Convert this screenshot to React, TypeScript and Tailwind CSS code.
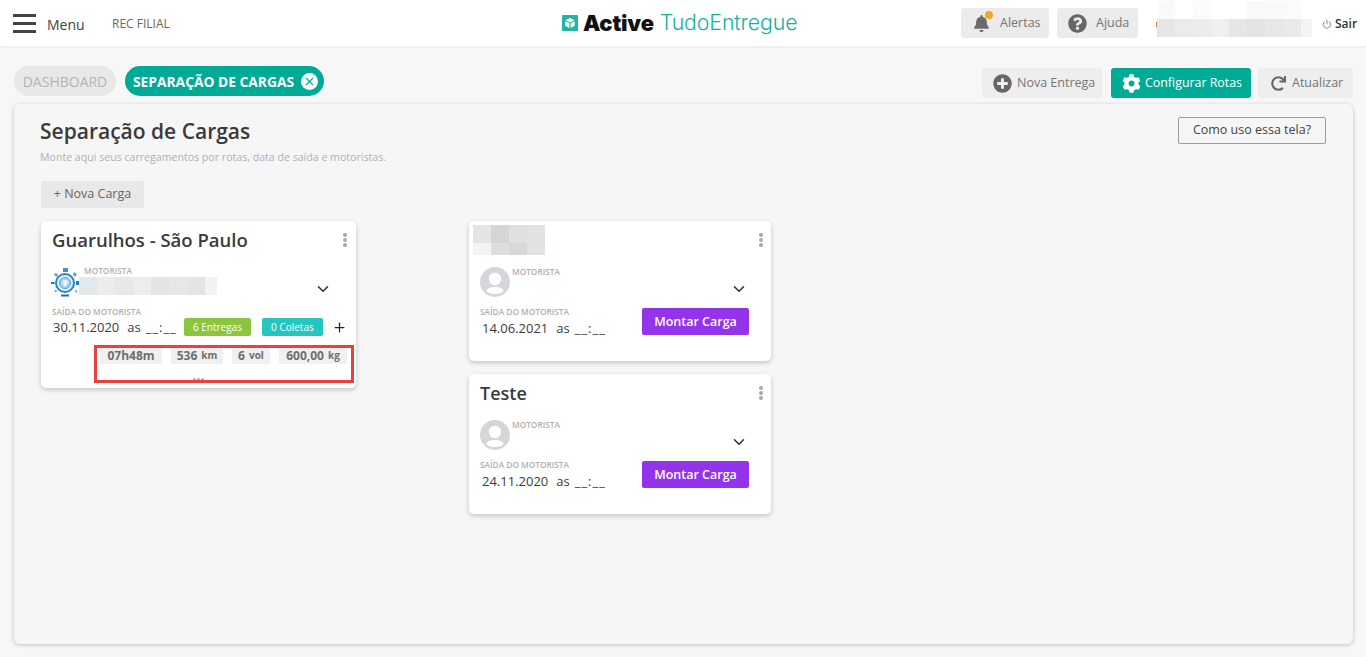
import { ChevronDown, Plus, Power, X } from 'lucide-react';
import { FaBell, FaCog, FaPlusCircle, FaQuestionCircle, FaRedo } from 'react-icons/fa';

const FONT = "font-['Open_Sans',sans-serif]";
const LABEL = 'h-[11px] text-[8.3px] leading-[9px] font-semibold whitespace-nowrap text-[#afafaf]';

const Mosaic = ({ colors, cols, className }: { colors: string[]; cols: number; className: string }) => (
  <div className={`shrink-0 overflow-hidden ${className}`}>
    <div className="grid" style={{ gridTemplateColumns: `repeat(${cols}, 18px)`, gridAutoRows: '18px' }}>
      {colors.map((c, i) => (
        <div key={i} style={{ backgroundColor: c }} />
      ))}
    </div>
  </div>
);

const Dots = () => (
  <div className="flex flex-col gap-[1px]">
    <span className="h-[4px] w-[4px] rounded-full bg-[#a9a9a9]" />
    <span className="h-[4px] w-[4px] rounded-full bg-[#a9a9a9]" />
    <span className="h-[4px] w-[4px] rounded-full bg-[#a9a9a9]" />
  </div>
);

const Avatar = () => (
  <svg viewBox="0 0 30 30" className="h-[30px] w-[30px] shrink-0">
    <circle cx="15" cy="15" r="15" fill="#d5d6da" />
    <circle cx="15" cy="12" r="6.2" fill="#fff" />
    <ellipse cx="15" cy="23.5" rx="8.5" ry="3.6" fill="#fff" />
  </svg>
);

const GlobeLogo = () => (
  <svg viewBox="0 0 28 30" className="h-[30px] w-[28px] shrink-0">
    <rect x="12" y="1" width="5" height="4" fill="#4d8fc4" />
    <path d="M4 6l3 1-1 3-3-2zM23 5l3 2-2 3-2-2z" fill="#6c9cc6" />
    <rect x="0" y="15" width="3.5" height="2" fill="#1f74b8" />
    <rect x="25" y="14" width="3" height="4" fill="#1f80c8" />
    <path d="M3 23l3 0-1 3zM23 24l3-1 0 3z" fill="#7aa5ca" />
    <rect x="10" y="27.5" width="8" height="2" fill="#2a6ca6" />
    <circle cx="14" cy="16" r="9" fill="#e6f2fa" stroke="#1f86cc" strokeWidth="2" />
    <circle cx="14" cy="16" r="5.5" fill="#a8d4ef" stroke="#4aa3dc" strokeWidth="1" />
    <path d="M12 13h4l1 3-3 4-2-3z" fill="#e8f4fb" />
  </svg>
);

const HeaderLogo = () => (
  <svg viewBox="0 0 16 16" className="h-[16px] w-[16px] shrink-0">
    <rect width="16" height="16" rx="1" fill="#1fb5a0" />
    <path d="M8 3l4.5 2.2L8 7.4 3.5 5.2zM3.3 6.3l4.1 2v4.6l-4.1-2.1zM12.7 6.3l-4.1 2v4.6l4.1-2.1z" fill="#fff" />
  </svg>
);

const DateLine = ({ date }: { date: string }) => (
  <p className="text-[13px] leading-[18px] whitespace-nowrap text-[#3c3c3c]">
    <span>{date}</span>
    <span className="ml-[8px]">as</span>
    <span className="ml-[5px] tracking-[1px]">__:__</span>
  </p>
);

const EmptyCard = ({ title, date }: { title: React.ReactNode; date: string }) => (
  <div className="h-[140px] rounded-[5px] bg-white pt-[4px] pr-[8px] pl-[11px] shadow-[0_2px_5px_rgba(0,0,0,0.2)]">
    <div className="flex h-[30px] items-start justify-between">
      {title}
      <div className="mt-[8px]">
        <Dots />
      </div>
    </div>
    <div className="mt-[12px] flex h-[30px]">
      <Avatar />
      <div className="ml-[2px] flex-1">
        <p className={LABEL}>MOTORISTA</p>
        <div className="mt-[2px] flex justify-end pr-[15px]">
          <ChevronDown size={18} strokeWidth={2} className="text-[#22323c]" />
        </div>
      </div>
    </div>
    <div className="mt-[10px] flex items-start justify-between pr-[14px]">
      <div>
        <p className={LABEL}>SAÍDA DO MOTORISTA</p>
        <div className="mt-[1px] pl-[2px]">
          <DateLine date={date} />
        </div>
      </div>
      <button className="mt-[1px] h-[27px] w-[107px] rounded-[2px] bg-[#9333ea] pt-[1px] text-[12.5px] font-semibold text-white">Montar Carga</button>
    </div>
  </div>
);

const StatChip = ({ value, unit, className }: { value: string; unit?: string; className: string }) => (
  <div className={`flex h-[17px] items-center justify-center bg-[#f0f0f0] text-[12px] font-bold text-[#6e6e6e] ${className}`}>
    {value}
    {unit && <span className="ml-[4px] text-[10px]">{unit}</span>}
  </div>
);

export default function App() {
  return (
    <div className={`flex h-[657px] w-[1366px] flex-col overflow-hidden bg-[#f7f7f7] ${FONT}`}>
      <header className="flex h-[46px] shrink-0 items-center bg-white shadow-[0_1px_2px_rgba(0,0,0,0.05)]">
        <div className="ml-[13px] flex w-[23px] flex-col gap-[5px]">
          <span className="h-[3px] bg-[#444]" />
          <span className="h-[3px] bg-[#444]" />
          <span className="h-[3px] bg-[#444]" />
        </div>
        <span className="mt-[2px] ml-[11px] w-[38px] text-[14px] text-[#3f3f46]">Menu</span>
        <span className="mt-[2px] ml-[27px] w-[59px] text-[12px] whitespace-nowrap text-[#6f6660]">REC FILIAL</span>
        <div className="ml-[391px] flex w-[235px] items-center">
          <HeaderLogo />
          <span className="ml-[5px] font-['Inter',sans-serif] text-[22px] leading-none font-black tracking-[-0.2px] text-[#111]">Active</span>
          <span className="ml-[6px] font-['Inter',sans-serif] text-[21.3px] leading-none font-light tracking-[-0.1px] whitespace-nowrap text-[#14b19c]">TudoEntregue</span>
        </div>
        <div className="ml-[164px] flex h-[30px] w-[88px] items-center rounded-[3px] bg-[#ebebeb] pl-[12px]">
          <div className="relative">
            <FaBell size={17} className="text-[#6b6b6b]" />
            <span className="absolute top-[-4px] right-[-3px] h-[8px] w-[8px] rounded-full bg-[#f5a623]" />
          </div>
          <span className="ml-[10px] text-[12.5px] text-[#757575]">Alertas</span>
        </div>
        <div className="ml-[8px] flex h-[30px] w-[81px] items-center rounded-[3px] bg-[#ebebeb] pl-[11px]">
          <FaQuestionCircle size={19} className="text-[#666]" />
          <span className="ml-[9px] text-[12.5px] text-[#757575]">Ajuda</span>
        </div>
        <span className="mb-[-3px] ml-[18px] h-[5px] w-[1px] bg-[#d98a4a]" />
        <Mosaic
          className="mb-[8px] h-[36px] w-[155px]"
          cols={9}
          colors={[
            '#fafafa', '#ffffff', '#fbfbfb', '#ffffff', '#ffffff', '#f9f9f9', '#fafafa', '#fbfbfb', '#ffffff',
            '#e5e6e8', '#ebebeb', '#ececec', '#efefef', '#e6e6e6', '#e3e3e3', '#e7e7e7', '#e9e9e9', '#f4f4f4',
          ]}
        />
        <Power size={10} className="mt-[2px] ml-[10px] text-[#777]" />
        <span className="mt-[2px] ml-[3px] text-[12px] font-semibold text-[#333]">Sair</span>
      </header>

      <div className="flex h-[58px] shrink-0 items-start pt-[20px] pl-[14px]">
        <div className="flex h-[30px] w-[102px] items-center justify-center rounded-full bg-[#e8e8e8] text-[14px] text-[#b4b4b4]">DASHBOARD</div>
        <div className="ml-[9px] flex h-[30px] w-[199px] items-center rounded-full bg-[#00ab96] pl-[8px]">
          <span className="mt-[2px] w-[162px] text-[13.8px] font-bold whitespace-nowrap text-white">SEPARAÇÃO DE CARGAS</span>
          <span className="ml-[6px] flex h-[17px] w-[17px] items-center justify-center rounded-full bg-white">
            <X size={13} strokeWidth={2} className="text-[#00ab96]" />
          </span>
        </div>
        <div className="mt-[2px] ml-[658px] flex h-[30px] w-[120px] items-center rounded-[3px] bg-[#eeeeee] pl-[11px]">
          <FaPlusCircle size={19} className="text-[#666]" />
          <span className="ml-[5px] text-[12.5px] whitespace-nowrap text-[#757575]">Nova Entrega</span>
        </div>
        <div className="mt-[2px] ml-[9px] flex h-[30px] w-[140px] items-center rounded-[3px] bg-[#00ab96] pl-[11px]">
          <FaCog size={19} className="text-white" />
          <span className="ml-[4px] text-[12.4px] whitespace-nowrap text-white">Configurar Rotas</span>
        </div>
        <div className="mt-[2px] ml-[7px] flex h-[30px] w-[95px] items-center rounded-[3px] bg-[#eeeeee] pl-[13px]">
          <FaRedo size={15} className="text-[#666]" />
          <span className="ml-[6px] text-[12.5px] whitespace-nowrap text-[#757575]">Atualizar</span>
        </div>
      </div>

      <main className="ml-[14px] h-[540px] w-[1339px] shrink-0 rounded-[6px] bg-[#f6f6f6] pt-[13px] pl-[27px] shadow-[0_1px_4px_rgba(0,0,0,0.22)]">
        <div className="flex items-start justify-between pr-[27px]">
          <div className="-ml-[1px]">
            <h1 className="text-[21px] leading-[28px] font-semibold text-[#3a3a3a]">Separação de Cargas</h1>
            <p className="mt-[5px] text-[10.6px] leading-[14px] text-[#b0b0b8]">Monte aqui seus carregamentos por rotas, data de saída e motoristas.</p>
          </div>
          <button className="h-[27px] w-[148px] rounded-[2px] border border-[#9c9c9c] text-[12.5px] text-[#444]">Como uso essa tela?</button>
        </div>

        <button className="mt-[17px] block h-[27px] w-[103px] rounded-[2px] bg-[#e8e8e8] text-[12.5px] text-[#666]">+ Nova Carga</button>

        <div className="mt-[13px] flex items-start gap-[113px]">
          <div className="relative h-[167px] w-[315px] rounded-[5px] bg-white pt-[6px] pl-[10px] shadow-[0_2px_5px_rgba(0,0,0,0.2)]">
            <div className="flex items-start justify-between pr-[9px]">
              <h2 className="ml-[1px] text-[18.5px] leading-[26px] font-semibold text-[#3a3a3a]">Guarulhos - São Paulo</h2>
              <div className="mt-[6px]">
                <Dots />
              </div>
            </div>
            <div className="mt-[14px] flex h-[30px]">
              <GlobeLogo />
              <div className="flex-1">
                <p className={`-mt-[1px] ml-[5px] ${LABEL}`}>MOTORISTA</p>
                <div className="flex items-start justify-between pr-[24px]">
                  <Mosaic
                    className="h-[18px] w-[138px]"
                    cols={8}
                    colors={['#e5e8ea', '#eeeceb', '#e8e8e8', '#eeecec', '#e4e4e4', '#e7e7e7', '#e4e4e4', '#f2f2f2']}
                  />
                  <ChevronDown size={18} strokeWidth={2} className="mt-[3px] text-[#22323c]" />
                </div>
              </div>
            </div>
            <p className={`mt-[10px] ml-[1px] ${LABEL}`}>SAÍDA DO MOTORISTA</p>
            <div className="flex items-center pl-[2px]">
              <DateLine date="30.11.2020" />
              <span className="ml-[7px] flex h-[18px] w-[67px] items-center justify-center rounded-[2px] bg-[#8cc63f] text-[10px] text-white">6 Entregas</span>
              <span className="ml-[11px] flex h-[18px] w-[61px] items-center justify-center rounded-[2px] bg-[#26c6bf] text-[10px] text-white">0 Coletas</span>
              <Plus size={15} strokeWidth={2} className="ml-[9px] text-[#222]" />
            </div>
            <div className="mt-[11px] ml-[49px] flex">
              <StatChip value="07h48m" className="w-[62px]" />
              <StatChip value="536" unit="km" className="ml-[9px] w-[52px]" />
              <StatChip value="6" unit="vol" className="ml-[9px] w-[38px]" />
              <StatChip value="600,00" unit="kg" className="ml-[9px] w-[68px]" />
            </div>
            <div className="mt-[14px] flex justify-center gap-[1px] pr-[10px]">
              <span className="h-[3px] w-[3px] rounded-full bg-[#a9a9a9]" />
              <span className="h-[3px] w-[3px] rounded-full bg-[#a9a9a9]" />
              <span className="h-[3px] w-[3px] rounded-full bg-[#a9a9a9]" />
            </div>
            <div className="absolute top-[124px] left-[53px] h-[38px] w-[260px] border-[3px] border-[#e8413e]" />
          </div>

          <div className="flex w-[302px] flex-col gap-[13px]">
            <EmptyCard
              date="14.06.2021"
              title={
                <Mosaic
                  className="-ml-[7px] h-[30px] w-[72px]"
                  cols={4}
                  colors={['#e4e4e4', '#d6d5d3', '#e0e0e0', '#e1e2e2', '#f3f3f3', '#dfdedd', '#d8d8d8', '#e0e1e1']}
                />
              }
            />
            <EmptyCard date="24.11.2020" title={<h2 className="mt-[2px] text-[18px] leading-[26px] font-semibold text-[#3a3a3a]">Teste</h2>} />
          </div>
        </div>
      </main>
    </div>
  );
}
